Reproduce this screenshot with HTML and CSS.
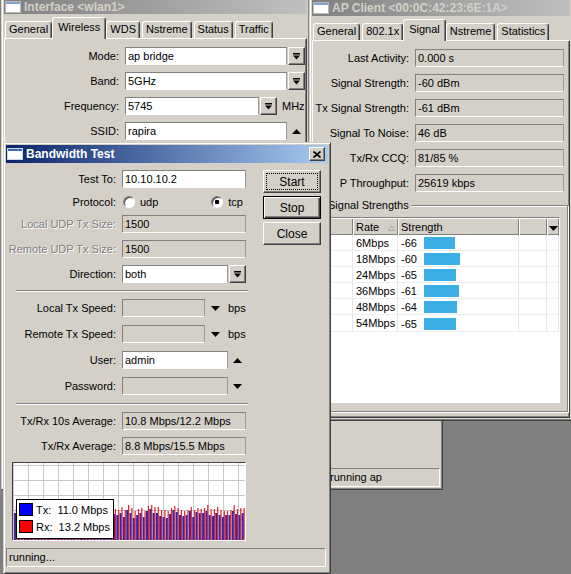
FILE: index.html
```html
<!DOCTYPE html>
<html lang="en">
<head>
    <meta charset="UTF-8">
    <title>Bandwidth Test</title>
    <link rel="stylesheet" href="styles.css">
</head>
<body>

    <!-- interface window, behind everything -->
    <div class="win win-iface">
        <div class="title">
            <svg class="ticon" width="16" height="12" viewBox="0 0 16 12"><rect x="0.5" y="0.5" width="15" height="11" fill="#fff" stroke="#b8b8b8"/><rect x="1" y="1" width="14" height="2" fill="#7ea4cf"/></svg>
            Interface &lt;wlan1&gt;
        </div>
        <div class="tabs">
            <span class="tab">General</span><span class="tab on">Wireless</span><span class="tab">WDS</span><span class="tab">Nstreme</span><span class="tab">Status</span><span class="tab">Traffic</span>
        </div>
        <div class="panel iface">
            <div class="row">
                <span class="lbl">Mode:</span><span class="fld long">ap bridge</span>
                <span class="dd"><svg width="7" height="7" viewBox="0 0 7 7"><rect width="7" height="1.5"/><path d="M0 2.5h7L3.5 6.5z"/></svg></span>
            </div>
            <div class="row">
                <span class="lbl">Band:</span><span class="fld long">5GHz</span>
                <span class="dd"><svg width="7" height="7" viewBox="0 0 7 7"><rect width="7" height="1.5"/><path d="M0 2.5h7L3.5 6.5z"/></svg></span>
            </div>
            <div class="row">
                <span class="lbl">Frequency:</span><span class="fld freq">5745</span>
                <span class="dd"><svg width="7" height="7" viewBox="0 0 7 7"><rect width="7" height="1.5"/><path d="M0 2.5h7L3.5 6.5z"/></svg></span>
                <span class="unit">MHz</span>
            </div>
            <div class="row">
                <span class="lbl">SSID:</span><span class="fld long">rapira</span>
                <span class="arr up"><svg width="9" height="5" viewBox="0 0 9 5"><path d="M0 5h9L4.5 0z"/></svg></span>
            </div>
        </div>
    </div>

    <!-- window behind AP Client, only its status bar shows -->
    <div class="win win-run">
        <div class="status">running ap</div>
    </div>

    <!-- AP client window -->
    <div class="win win-ap">
        <div class="title">
            <svg class="ticon" width="16" height="12" viewBox="0 0 16 12"><rect x="0.5" y="0.5" width="15" height="11" fill="#fff" stroke="#b8b8b8"/><rect x="1" y="1" width="14" height="2" fill="#7ea4cf"/></svg>
            AP Client &lt;00:0C:42:23:6E:1A&gt;
        </div>
        <div class="tabs">
            <span class="tab">General</span><span class="tab">802.1x</span><span class="tab on">Signal</span><span class="tab">Nstreme</span><span class="tab">Statistics</span>
        </div>
        <div class="panel ap">
            <div class="row"><span class="lbl">Last Activity:</span><span class="fld ro">0.000 s</span></div>
            <div class="row"><span class="lbl">Signal Strength:</span><span class="fld ro">-60 dBm</span></div>
            <div class="row"><span class="lbl">Tx Signal Strength:</span><span class="fld ro">-61 dBm</span></div>
            <div class="row"><span class="lbl">Signal To Noise:</span><span class="fld ro">46 dB</span></div>
            <div class="row"><span class="lbl">Tx/Rx CCQ:</span><span class="fld ro">81/85 %</span></div>
            <div class="row"><span class="lbl">P Throughput:</span><span class="fld ro">25619 kbps</span></div>

            <fieldset class="grp">
                <legend>Signal Strengths</legend>
                <div class="list">
                    <table>
                        <thead>
                            <tr>
                                <th class="c0"></th>
                                <th class="c1">Rate<svg class="sort" width="7" height="6" viewBox="0 0 7 6"><path d="M3.5 0.5L6.5 5.5H0.5Z" fill="none" stroke="#a8a8a8"/></svg></th>
                                <th class="c2">Strength</th>
                                <th class="c3"></th>
                                <th class="c4"><svg width="9" height="5" viewBox="0 0 9 5"><path d="M0 0h9L4.5 5z"/></svg></th>
                            </tr>
                        </thead>
                        <tbody>
                            <tr><td></td><td>6Mbps</td><td><span class="val">-66</span><span class="bar" style="width:31px"></span></td><td></td><td></td></tr>
                            <tr><td></td><td>18Mbps</td><td><span class="val">-60</span><span class="bar" style="width:36px"></span></td><td></td><td></td></tr>
                            <tr><td></td><td>24Mbps</td><td><span class="val">-65</span><span class="bar" style="width:32px"></span></td><td></td><td></td></tr>
                            <tr><td></td><td>36Mbps</td><td><span class="val">-61</span><span class="bar" style="width:35px"></span></td><td></td><td></td></tr>
                            <tr><td></td><td>48Mbps</td><td><span class="val">-64</span><span class="bar" style="width:33px"></span></td><td></td><td></td></tr>
                            <tr><td></td><td>54Mbps</td><td><span class="val">-65</span><span class="bar" style="width:32px"></span></td><td></td><td></td></tr>
                        </tbody>
                    </table>
                </div>
            </fieldset>
        </div>
    </div>

    <!-- bandwidth test, the active window -->
    <div class="win win-bt">
        <div class="title active">
            <svg class="ticon" width="16" height="12" viewBox="0 0 16 12"><rect x="0.5" y="0.5" width="15" height="11" fill="#fff" stroke="#c8d8f0"/><rect x="1" y="1" width="14" height="2" fill="#3a6ea5"/></svg>
            Bandwidth Test
            <span class="xbtn"><svg width="8" height="7" viewBox="0 0 8 7"><path d="M0.5 0.5l7 6M7.5 0.5l-7 6" stroke="#000" stroke-width="1.7"/></svg></span>
        </div>

        <div class="bt-body">
            <div class="bt-form">
                <div class="row"><span class="lbl">Test To:</span><span class="fld full">10.10.10.2</span></div>
                <div class="row radios">
                    <span class="lbl">Protocol:</span>
                    <span class="opts">
                        <span class="radio"></span><span class="rtxt">udp</span>
                        <span class="radio on"></span><span class="rtxt">tcp</span>
                    </span>
                </div>
                <div class="row"><span class="lbl off">Local UDP Tx Size:</span><span class="fld full ro">1500</span></div>
                <div class="row"><span class="lbl off">Remote UDP Tx Size:</span><span class="fld full ro">1500</span></div>
                <div class="row">
                    <span class="lbl">Direction:</span><span class="fld mid">both</span>
                    <span class="dd"><svg width="7" height="7" viewBox="0 0 7 7"><rect width="7" height="1.5"/><path d="M0 2.5h7L3.5 6.5z"/></svg></span>
                </div>

                <div class="sep"></div>

                <div class="row loose">
                    <span class="lbl">Local Tx Speed:</span><span class="fld short ro"></span>
                    <span class="arr"><svg width="9" height="5" viewBox="0 0 9 5"><path d="M0 0h9L4.5 5z"/></svg></span>
                    <span class="unit bps">bps</span>
                </div>
                <div class="row loose">
                    <span class="lbl">Remote Tx Speed:</span><span class="fld short ro"></span>
                    <span class="arr"><svg width="9" height="5" viewBox="0 0 9 5"><path d="M0 0h9L4.5 5z"/></svg></span>
                    <span class="unit bps">bps</span>
                </div>
                <div class="row loose">
                    <span class="lbl">User:</span><span class="fld mid">admin</span>
                    <span class="arr up"><svg width="9" height="5" viewBox="0 0 9 5"><path d="M0 5h9L4.5 0z"/></svg></span>
                </div>
                <div class="row loose">
                    <span class="lbl">Password:</span><span class="fld mid ro"></span>
                    <span class="arr up"><svg width="9" height="5" viewBox="0 0 9 5"><path d="M0 0h9L4.5 5z"/></svg></span>
                </div>

                <div class="sep sep2"></div>

                <div class="row"><span class="lbl">Tx/Rx 10s Average:</span><span class="fld full ro">10.8 Mbps/12.2 Mbps</span></div>
                <div class="row"><span class="lbl">Tx/Rx Average:</span><span class="fld full ro">8.8 Mbps/15.5 Mbps</span></div>

                <div class="graph">
                    <svg id="graph" width="232" height="77" viewBox="0 0 232 77"></svg>
                    <div class="legend">
                        <div class="lg"><span class="sw tx"></span>Tx:&nbsp; 11.0 Mbps</div>
                        <div class="lg"><span class="sw rx"></span>Rx:&nbsp; 13.2 Mbps</div>
                    </div>
                </div>
            </div>

            <div class="bt-btns">
                <button class="btn focus">Start</button>
                <button class="btn def">Stop</button>
                <button class="btn">Close</button>
            </div>
        </div>

        <div class="status">running...</div>
    </div>

    <script>
        // traffic bars: rx (red) behind tx (purple)
        (function () {
            var svg = document.getElementById("graph");
            var ns = "http://www.w3.org/2000/svg";
            var seed = 17;
            function rnd() {
                seed = (seed * 9301 + 49297) % 233280;
                return seed / 233280;
            }
            function bar(x, w, h, color) {
                var r = document.createElementNS(ns, "rect");
                r.setAttribute("x", x);
                r.setAttribute("y", 77 - h);
                r.setAttribute("width", w);
                r.setAttribute("height", h);
                r.setAttribute("fill", color);
                svg.appendChild(r);
            }
            for (var i = 0; i < 70; i++) {
                var x = 1 + i * 3.3;
                var rx = 29 + Math.round(rnd() * 6);
                var tx = rx - 4 - Math.round(rnd() * 3);
                bar(x + 1.8, 1.2, rx, "#e2202e");
                bar(x, 2, tx, "#4a1f8e");
            }
        })();
    </script>

</body>
</html>
```

FILE: styles.css
```css
* {
    box-sizing: border-box;
}
body {
    margin: 0;
    width: 571px;
    height: 574px;
    position: relative;
    overflow: hidden;
    background: #808080;
    font-family: "Liberation Sans", Arial, sans-serif;
    font-size: 11px;
    color: #000;
}

/* windows */
.win {
    position: absolute;
    display: flex;
    flex-direction: column;
    overflow: hidden;
    background: #d4d0c8;
    border: 1px solid;
    border-color: #d4d0c8 #404040 #404040 #d4d0c8;
    box-shadow: inset 1px 1px #fff, inset -1px -1px #808080;
    padding: 2px;
}
.win-iface { left: 1px; top: -7px; width: 309px; height: 497px; z-index: 1; }
.win-run { left: 318px; top: 300px; width: 125px; height: 190px; z-index: 1; }
.win-ap { left: 309px; top: -5px; width: 264px; height: 426px; z-index: 2; }
.win-bt { left: 3px; top: 142px; width: 328px; height: 432px; z-index: 3; }

.title {
    flex: none;
    height: 18px;
    display: flex;
    align-items: center;
    gap: 3px;
    padding: 0 1px;
    white-space: nowrap;
    font-weight: bold;
    font-size: 12px;
    color: #d4d0c8;
    background: linear-gradient(to right, #808080, #c0c0c0);
}
.win-iface .title {
    padding-top: 4px;
}
.win-ap .title {
    padding-top: 2px;
}
.title.active {
    color: #fff;
    background: linear-gradient(to right, #0a246a, #a6caf0);
}
.ticon {
    flex: none;
}
.xbtn {
    margin-left: auto;
    margin-right: 2px;
    width: 16px;
    height: 14px;
    display: flex;
    align-items: center;
    justify-content: center;
    background: #d4d0c8;
    border: 1px solid;
    border-color: #fff #404040 #404040 #fff;
    box-shadow: inset -1px -1px #808080;
}

/* tabs */
.tabs {
    flex: none;
    display: flex;
    align-items: flex-end;
    height: 21px;
    margin-top: 3px;
    padding-left: 1px;
    position: relative;
    z-index: 1;
}
.tab {
    height: 17px;
    padding: 0 3px;
    margin-right: 2px;
    line-height: 15px;
    white-space: nowrap;
    border: 1px solid;
    border-bottom: 0;
    border-color: #fff #404040 #fff #fff;
    box-shadow: inset -1px 0 #808080;
    border-radius: 3px 3px 0 0;
    background: #d4d0c8;
}
.tab.on {
    height: 22px;
    margin: 0 0 -1px -2px;
    padding: 0 5px;
    line-height: 19px;
    position: relative;
}
.panel {
    flex: 1;
    border: 1px solid;
    border-color: #fff #404040 #404040 #fff;
    box-shadow: inset -1px -1px #808080;
    padding-top: 8px;
}

/* form rows */
.row {
    display: flex;
    align-items: center;
    height: 18px;
    margin-bottom: 7px;
    white-space: nowrap;
}
.row.loose {
    margin-bottom: 8px;
}
.row.radios {
    height: 13px;
}
.lbl {
    flex: none;
    text-align: right;
    padding-right: 6px;
}
.lbl.off {
    color: #808080;
    text-shadow: 1px 1px 0 #fff;
}
.iface .lbl { width: 120px; }
.ap .lbl { width: 102px; }
.bt-form .lbl { width: 116px; }

.fld {
    flex: none;
    height: 18px;
    line-height: 16px;
    padding: 0 2px;
    background: #fff;
    border: 1px solid;
    border-color: #808080 #9a9a9a #fff #808080;
    overflow: hidden;
}
.fld.ro {
    background: #d4d0c8;
}
.iface .fld.long { width: 162px; }
.iface .fld.freq { width: 134px; }
.ap .fld { width: 149px; }
.bt-form .fld.full { width: 124px; }
.bt-form .fld.mid { width: 106px; }
.bt-form .fld.short { width: 83px; }

.dd {
    flex: none;
    width: 17px;
    height: 18px;
    margin-left: 1px;
    display: flex;
    align-items: center;
    justify-content: center;
    border: 1px solid;
    border-color: #fff #404040 #404040 #fff;
    box-shadow: inset -1px -1px #808080;
}
.arr {
    display: flex;
    margin-left: 6px;
}
.arr.up {
    margin-left: 5px;
}
.unit {
    margin-left: 5px;
}
.unit.bps {
    margin-left: 8px;
}

/* radios */
.opts {
    display: flex;
    align-items: center;
    width: 124px;
}
.radio {
    width: 12px;
    height: 12px;
    margin-left: 1px;
    border-radius: 50%;
    background: #fff;
    border: 1px solid;
    border-color: #808080 #fff #fff #808080;
    box-shadow: inset 1px 1px #404040;
}
.radio.on {
    margin-left: auto;
    background: radial-gradient(circle, #000 0 2px, #fff 2.6px);
}
.rtxt {
    margin-left: 5px;
}
.rtxt:last-child {
    margin-right: 3px;
}

.sep {
    height: 2px;
    width: 232px;
    margin: 0 0 7px 10px;
    border-top: 1px solid #808080;
    border-bottom: 1px solid #fff;
}
.sep2 {
    margin-top: 1px;
}

/* bandwidth test body */
.bt-body {
    display: flex;
    padding-top: 7px;
}
.bt-form {
    width: 244px;
}
.bt-btns {
    display: flex;
    flex-direction: column;
    gap: 3px;
    margin-left: 13px;
}
.btn {
    width: 58px;
    height: 23px;
    padding: 0;
    font-family: inherit;
    font-size: 12px;
    color: #000;
    background: #d4d0c8;
    border: 1px solid;
    border-color: #fff #404040 #404040 #fff;
    box-shadow: inset -1px -1px #808080;
}
.btn.focus {
    outline: 1px dotted #000;
    outline-offset: -4px;
}
.btn.def {
    border-color: #000;
    box-shadow: inset 1px 1px #fff, inset -1px -1px #404040, inset -2px -2px #808080;
}

.graph {
    position: relative;
    width: 234px;
    height: 79px;
    margin-left: 6px;
    border: 1px solid;
    border-color: #404040 #fff #fff #404040;
    background:
        linear-gradient(#c8c8c8 1px, transparent 1px) 0 2px / 15px 15px,
        linear-gradient(90deg, #c8c8c8 1px, transparent 1px) 15px 0 / 15px 15px,
        #fff;
}
#graph {
    display: block;
}
.legend {
    position: absolute;
    left: 3px;
    top: 36px;
    width: 98px;
    height: 40px;
    padding: 1px 0 0 2px;
    background: #fff;
    border: 1px solid #000;
}
.lg {
    display: flex;
    align-items: center;
    height: 17px;
}
.sw {
    width: 14px;
    height: 13px;
    margin-right: 3px;
    border: 1px solid #000;
}
.sw.tx { background: #0000ff; }
.sw.rx { background: #ff0000; }

.status {
    margin-top: auto;
    height: 19px;
    line-height: 17px;
    padding-left: 2px;
    border: 1px solid;
    border-color: #808080 #fff #fff #808080;
    white-space: nowrap;
}
.win-bt .status {
    margin: auto 2px 4px 0;
}
.win-run .status {
    padding-left: 8px;
}

/* signal strengths list */
.grp {
    margin: 0 1px 0 7px;
    padding: 5px 7px 8px 5px;
    border: 1px solid #808080;
    box-shadow: inset 1px 1px #fff, 1px 1px #fff;
    min-width: 0;
}
.grp legend {
    padding: 0 2px;
    background: #d4d0c8;
    line-height: 13px;
}
.list {
    height: 186px;
    overflow: hidden;
    background: #fff;
    border: 1px solid;
    border-color: #808080 #fff #fff #808080;
}
.list table {
    width: 232px;
    table-layout: fixed;
    border-collapse: separate;
    border-spacing: 0;
}
.list th {
    height: 17px;
    padding: 0 3px;
    text-align: left;
    font-weight: normal;
    background: #d4d0c8;
    box-shadow: inset 1px 1px #fff, inset -1px -1px #808080;
    white-space: nowrap;
}
.list th.c0 { width: 26px; }
.list th.c1 { width: 45px; }
.list th.c2 { width: 121px; }
.list th.c3 { width: 28px; }
.list th.c4 { width: 12px; padding: 0 0 0 2px; }
.sort {
    margin-left: 9px;
}
.list td {
    height: 15px;
    padding: 0 3px;
    line-height: 14px;
    white-space: nowrap;
    border-right: 1px solid #e6e6e6;
    border-bottom: 1px solid #eeeeee;
}
.val {
    display: inline-block;
    width: 23px;
    vertical-align: middle;
}
.bar {
    display: inline-block;
    height: 12px;
    vertical-align: middle;
    background: #3cb0e6;
}
```
